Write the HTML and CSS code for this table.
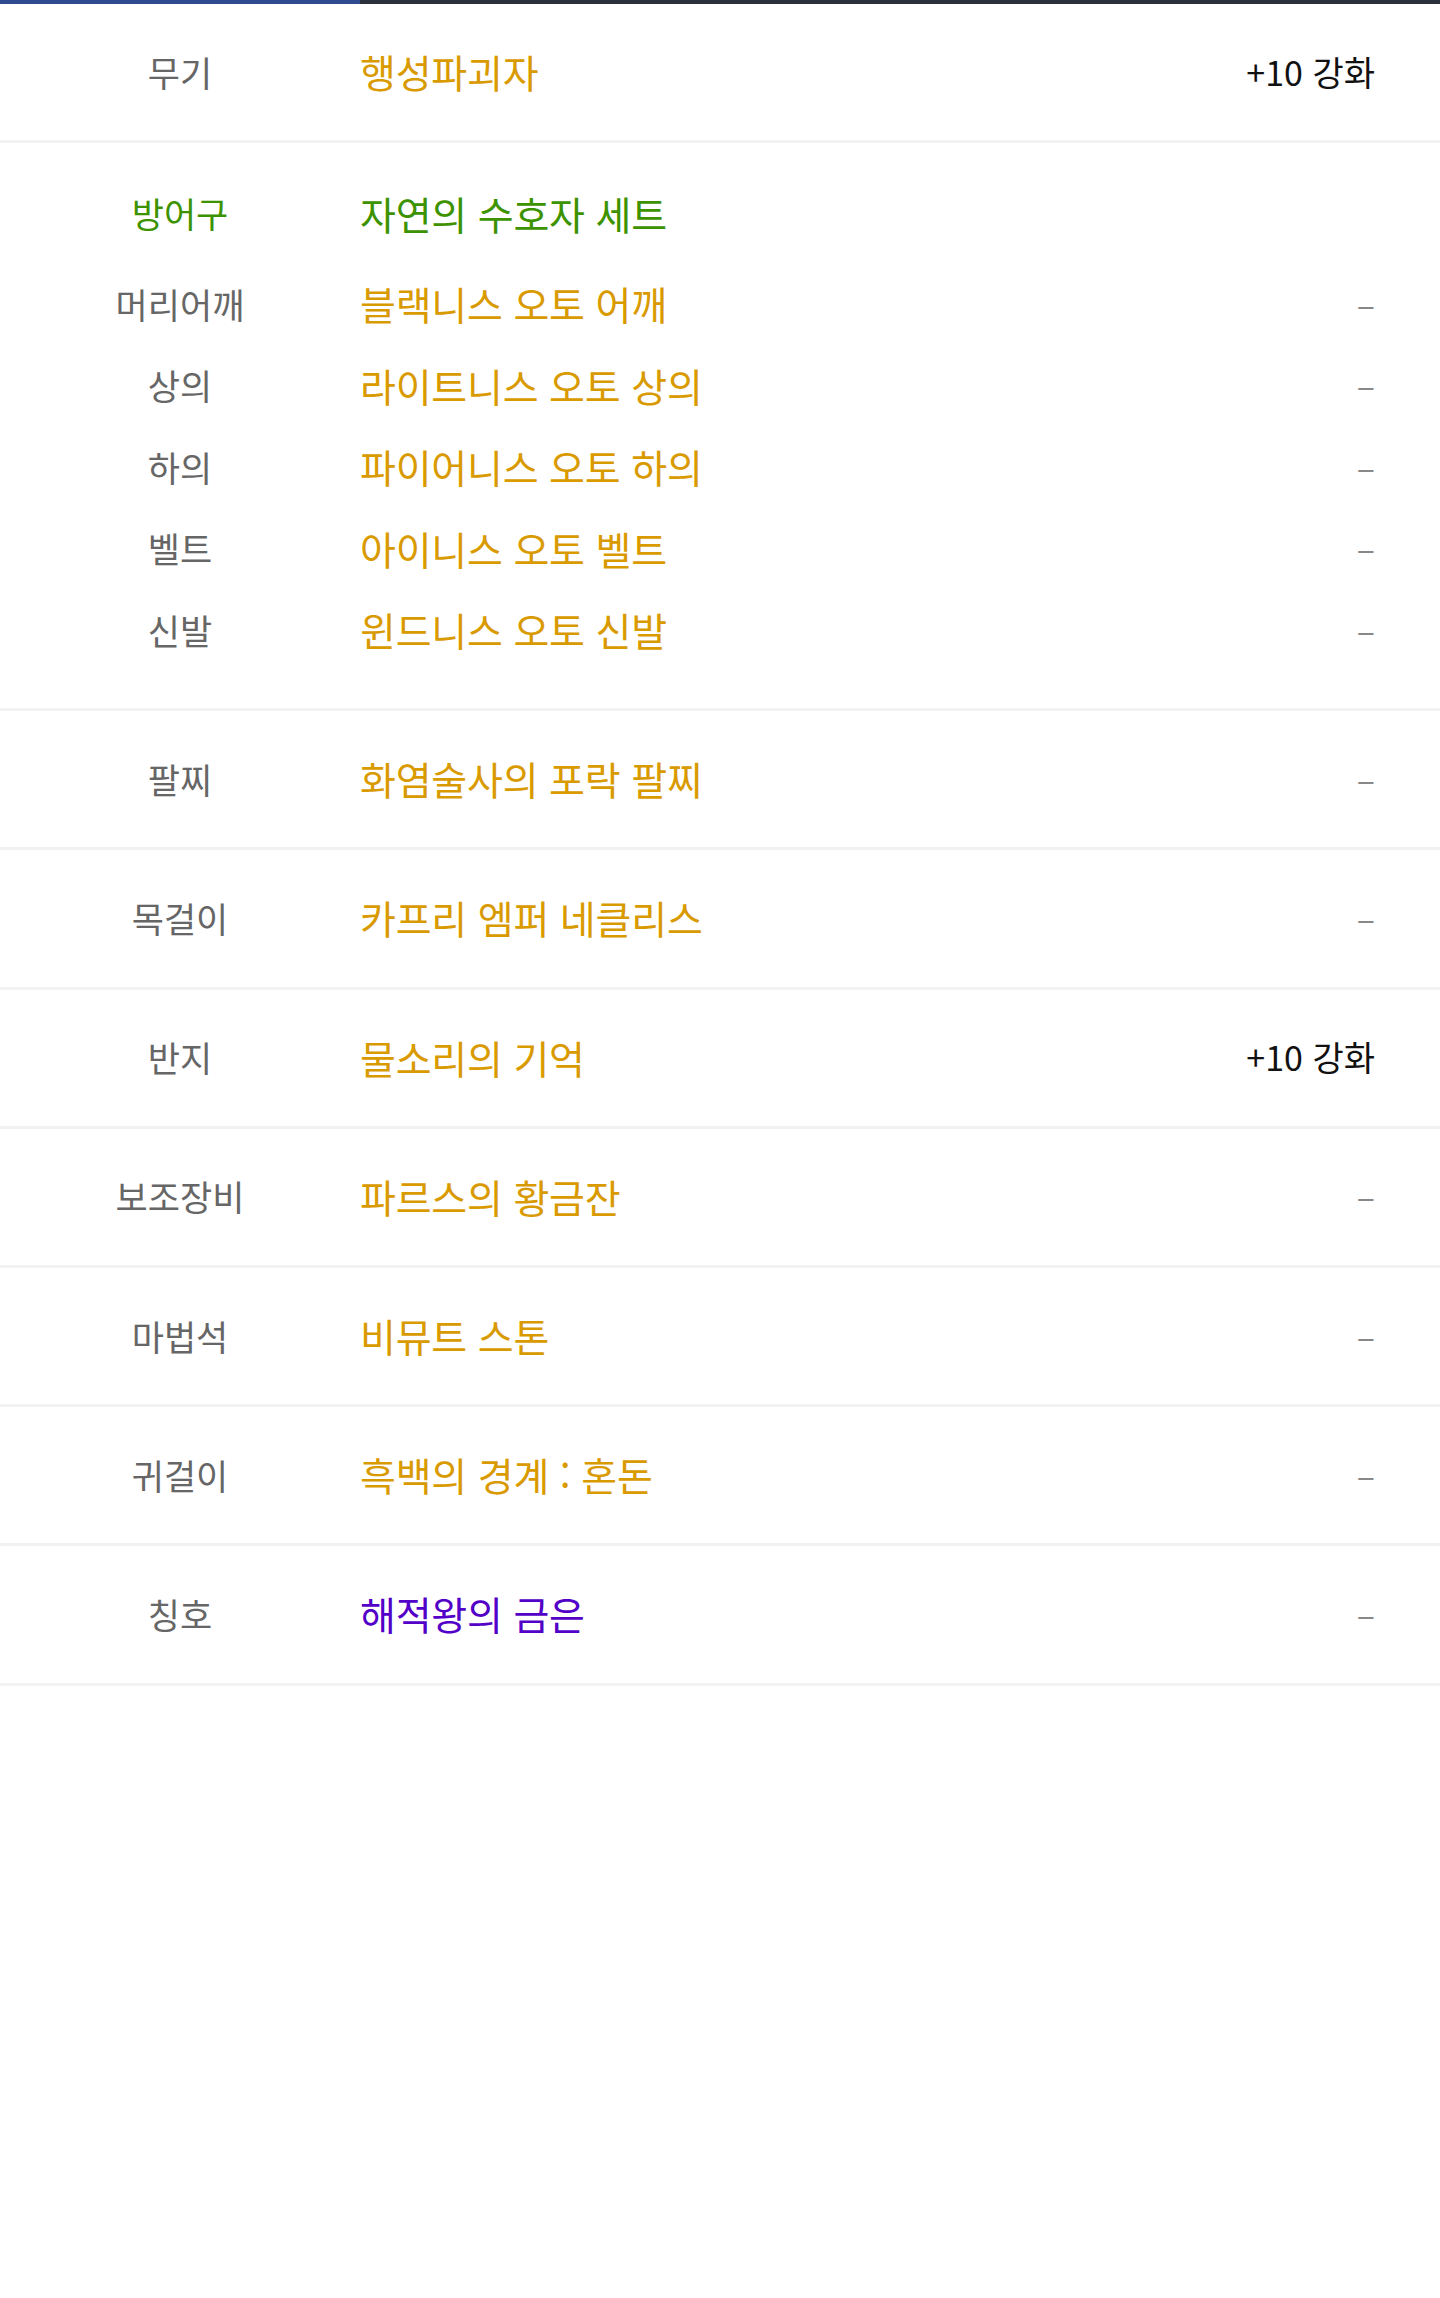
FILE: index.html
```html
<!DOCTYPE html>
<html lang="ko">
<head>
    <meta charset="UTF-8">
    <meta name="viewport" content="width=device-width, initial-scale=1.0">
    <title>장착 장비</title>
    <link rel="stylesheet" href="styles.css">
</head>
<body>
    <div class="tab-bar">
        <div class="tab-active"></div>
    </div>
    <div class="equip-list">
        <div class="row">
            <span class="slot">무기</span>
            <span class="item epic">행성파괴자</span>
            <span class="extra">+10 강화</span>
        </div>
        <div class="set-block">
            <div class="line set-head">
                <span class="slot set">방어구</span>
                <span class="item set">자연의 수호자 세트</span>
                <span class="extra"></span>
            </div>
            <div class="line">
                <span class="slot">머리어깨</span>
                <span class="item epic">블랙니스 오토 어깨</span>
                <span class="extra none">–</span>
            </div>
            <div class="line">
                <span class="slot">상의</span>
                <span class="item epic">라이트니스 오토 상의</span>
                <span class="extra none">–</span>
            </div>
            <div class="line">
                <span class="slot">하의</span>
                <span class="item epic">파이어니스 오토 하의</span>
                <span class="extra none">–</span>
            </div>
            <div class="line">
                <span class="slot">벨트</span>
                <span class="item epic">아이니스 오토 벨트</span>
                <span class="extra none">–</span>
            </div>
            <div class="line">
                <span class="slot">신발</span>
                <span class="item epic">윈드니스 오토 신발</span>
                <span class="extra none">–</span>
            </div>
        </div>
        <div class="row">
            <span class="slot">팔찌</span>
            <span class="item epic">화염술사의 포락 팔찌</span>
            <span class="extra none">–</span>
        </div>
        <div class="row">
            <span class="slot">목걸이</span>
            <span class="item epic">카프리 엠퍼 네클리스</span>
            <span class="extra none">–</span>
        </div>
        <div class="row">
            <span class="slot">반지</span>
            <span class="item epic">물소리의 기억</span>
            <span class="extra">+10 강화</span>
        </div>
        <div class="row">
            <span class="slot">보조장비</span>
            <span class="item epic">파르스의 황금잔</span>
            <span class="extra none">–</span>
        </div>
        <div class="row">
            <span class="slot">마법석</span>
            <span class="item epic">비뮤트 스톤</span>
            <span class="extra none">–</span>
        </div>
        <div class="row">
            <span class="slot">귀걸이</span>
            <span class="item epic">흑백의 경계 : 혼돈</span>
            <span class="extra none">–</span>
        </div>
        <div class="row">
            <span class="slot">칭호</span>
            <span class="item unique">해적왕의 금은</span>
            <span class="extra none">–</span>
        </div>
    </div>
</body>
</html>
```

FILE: styles.css
```css
body {
    margin: 0;
    font-family: "Noto Sans CJK KR", "Noto Sans", sans-serif;
    font-size: 34px;
    color: #111;
    background: #fff;
}
.tab-bar {
    height: 4px;
    background-color: #2a313c;
}
.tab-active {
    width: 360px;
    height: 100%;
    background-color: #2d4b8e;
}
.row,
.line {
    display: grid;
    grid-template-columns: 360px 1fr auto;
    align-items: center;
    padding-right: 65px;
}
.row {
    box-sizing: border-box;
    height: 139.2px;
    padding-bottom: 2px;
    border-bottom: 3px solid #f2f2f2;
}
.set-block {
    padding: 29px 0 38px;
    border-bottom: 3px solid #f2f2f2;
}
.line {
    height: 81.5px;
}
.set-head {
    margin-bottom: 9px;
}
.slot {
    text-align: center;
    font-size: 35px;
    color: #666;
}
.slot.set,
.item.set {
    color: #3d9200;
}
.item {
    font-size: 39px;
    letter-spacing: -0.2px;
}
.epic {
    color: #d99a00;
}
.unique {
    color: #5300c8;
}
.extra {
    text-align: right;
    color: #111;
}
.extra.none {
    color: #888;
}
```
